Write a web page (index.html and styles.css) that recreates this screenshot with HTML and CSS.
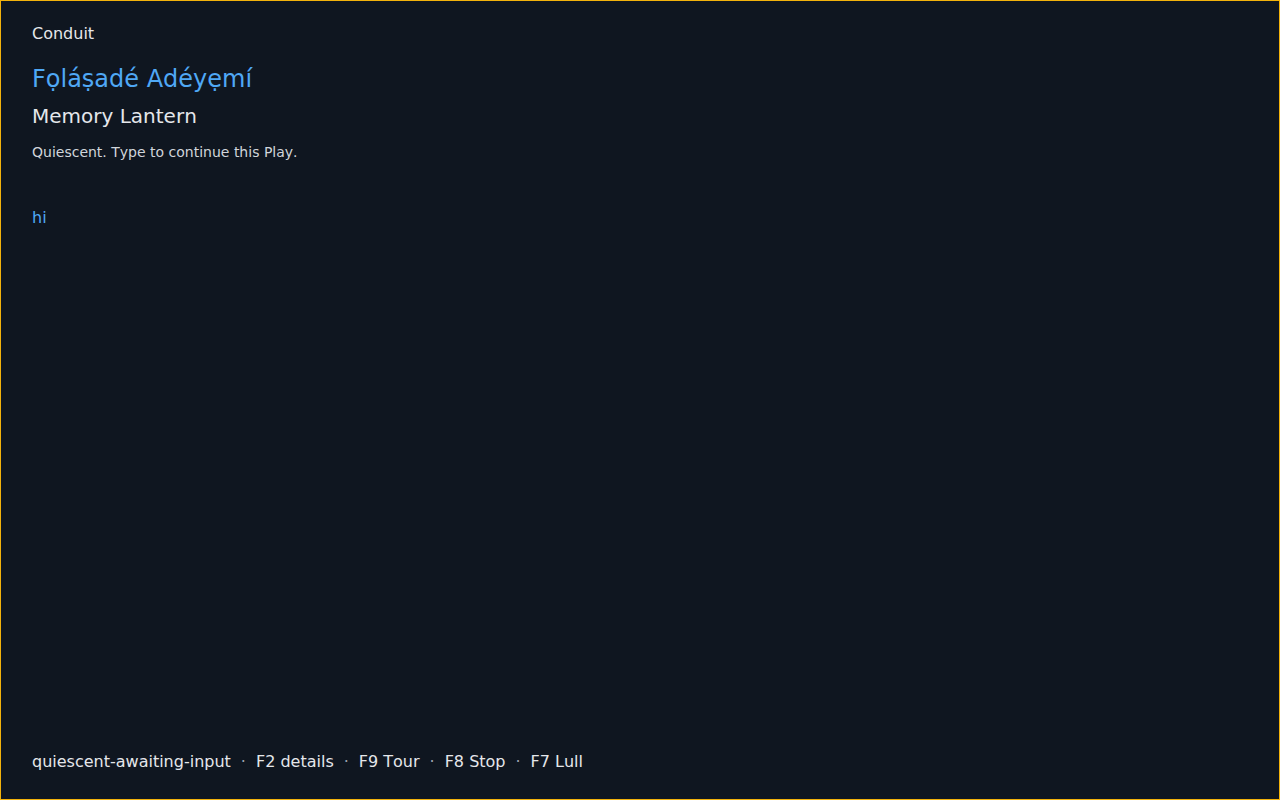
FILE: index.html
```html
<!DOCTYPE html>
<html>
<head>
<meta charset="utf-8">
<link rel="stylesheet" href="styles.css">
</head>
<body>
<div class="screen">
  <main class="main">
    <div class="app">Conduit</div>
    <h1 class="name">Fọláṣadé Adéyẹmí</h1>
    <h2 class="title">Memory Lantern</h2>
    <p class="status">Quiescent. Type to continue this Play.</p>
    <div class="input">hi</div>
  </main>
  <footer class="footer">
    <span>quiescent-awaiting-input</span>
    <span class="dot">·</span>
    <span>F2 details</span>
    <span class="dot">·</span>
    <span>F9 Tour</span>
    <span class="dot">·</span>
    <span>F8 Stop</span>
    <span class="dot">·</span>
    <span>F7 Lull</span>
  </footer>
</div>
</body>
</html>
```
FILE: styles.css
```css
html, body {
  margin: 0;
  padding: 0;
  background: #0f1620;
}
.screen {
  box-sizing: border-box;
  width: 1280px;
  height: 800px;
  border: 1px solid #f2b20c;
  background: #0f1620;
  color: #e5e7eb;
  font-family: "DejaVu Sans", sans-serif;
  font-kerning: none;
  display: flex;
  flex-direction: column;
  padding: 0 31px;
}
.main {
  flex: 1;
  padding-top: 23px;
}
.app {
  font-size: 16px;
  line-height: 19px;
}
.name {
  margin: 22px 0 0;
  font-size: 24px;
  line-height: 28px;
  font-weight: normal;
  color: #4fa8f5;
}
.title {
  margin: 11px 0 0;
  font-size: 20px;
  line-height: 24px;
  font-weight: normal;
  color: #e5e7eb;
}
.status {
  margin: 16px 0 0;
  font-size: 14px;
  line-height: 17px;
  color: #d1d5db;
}
.input {
  margin-top: 47px;
  font-size: 16px;
  line-height: 19px;
  color: #4fa8f5;
}
.footer {
  display: flex;
  gap: 10px;
  font-size: 16px;
  line-height: 19px;
  padding-bottom: 28px;
  color: #e5e7eb;
}
.dot {
  color: #9ca3af;
}
```
